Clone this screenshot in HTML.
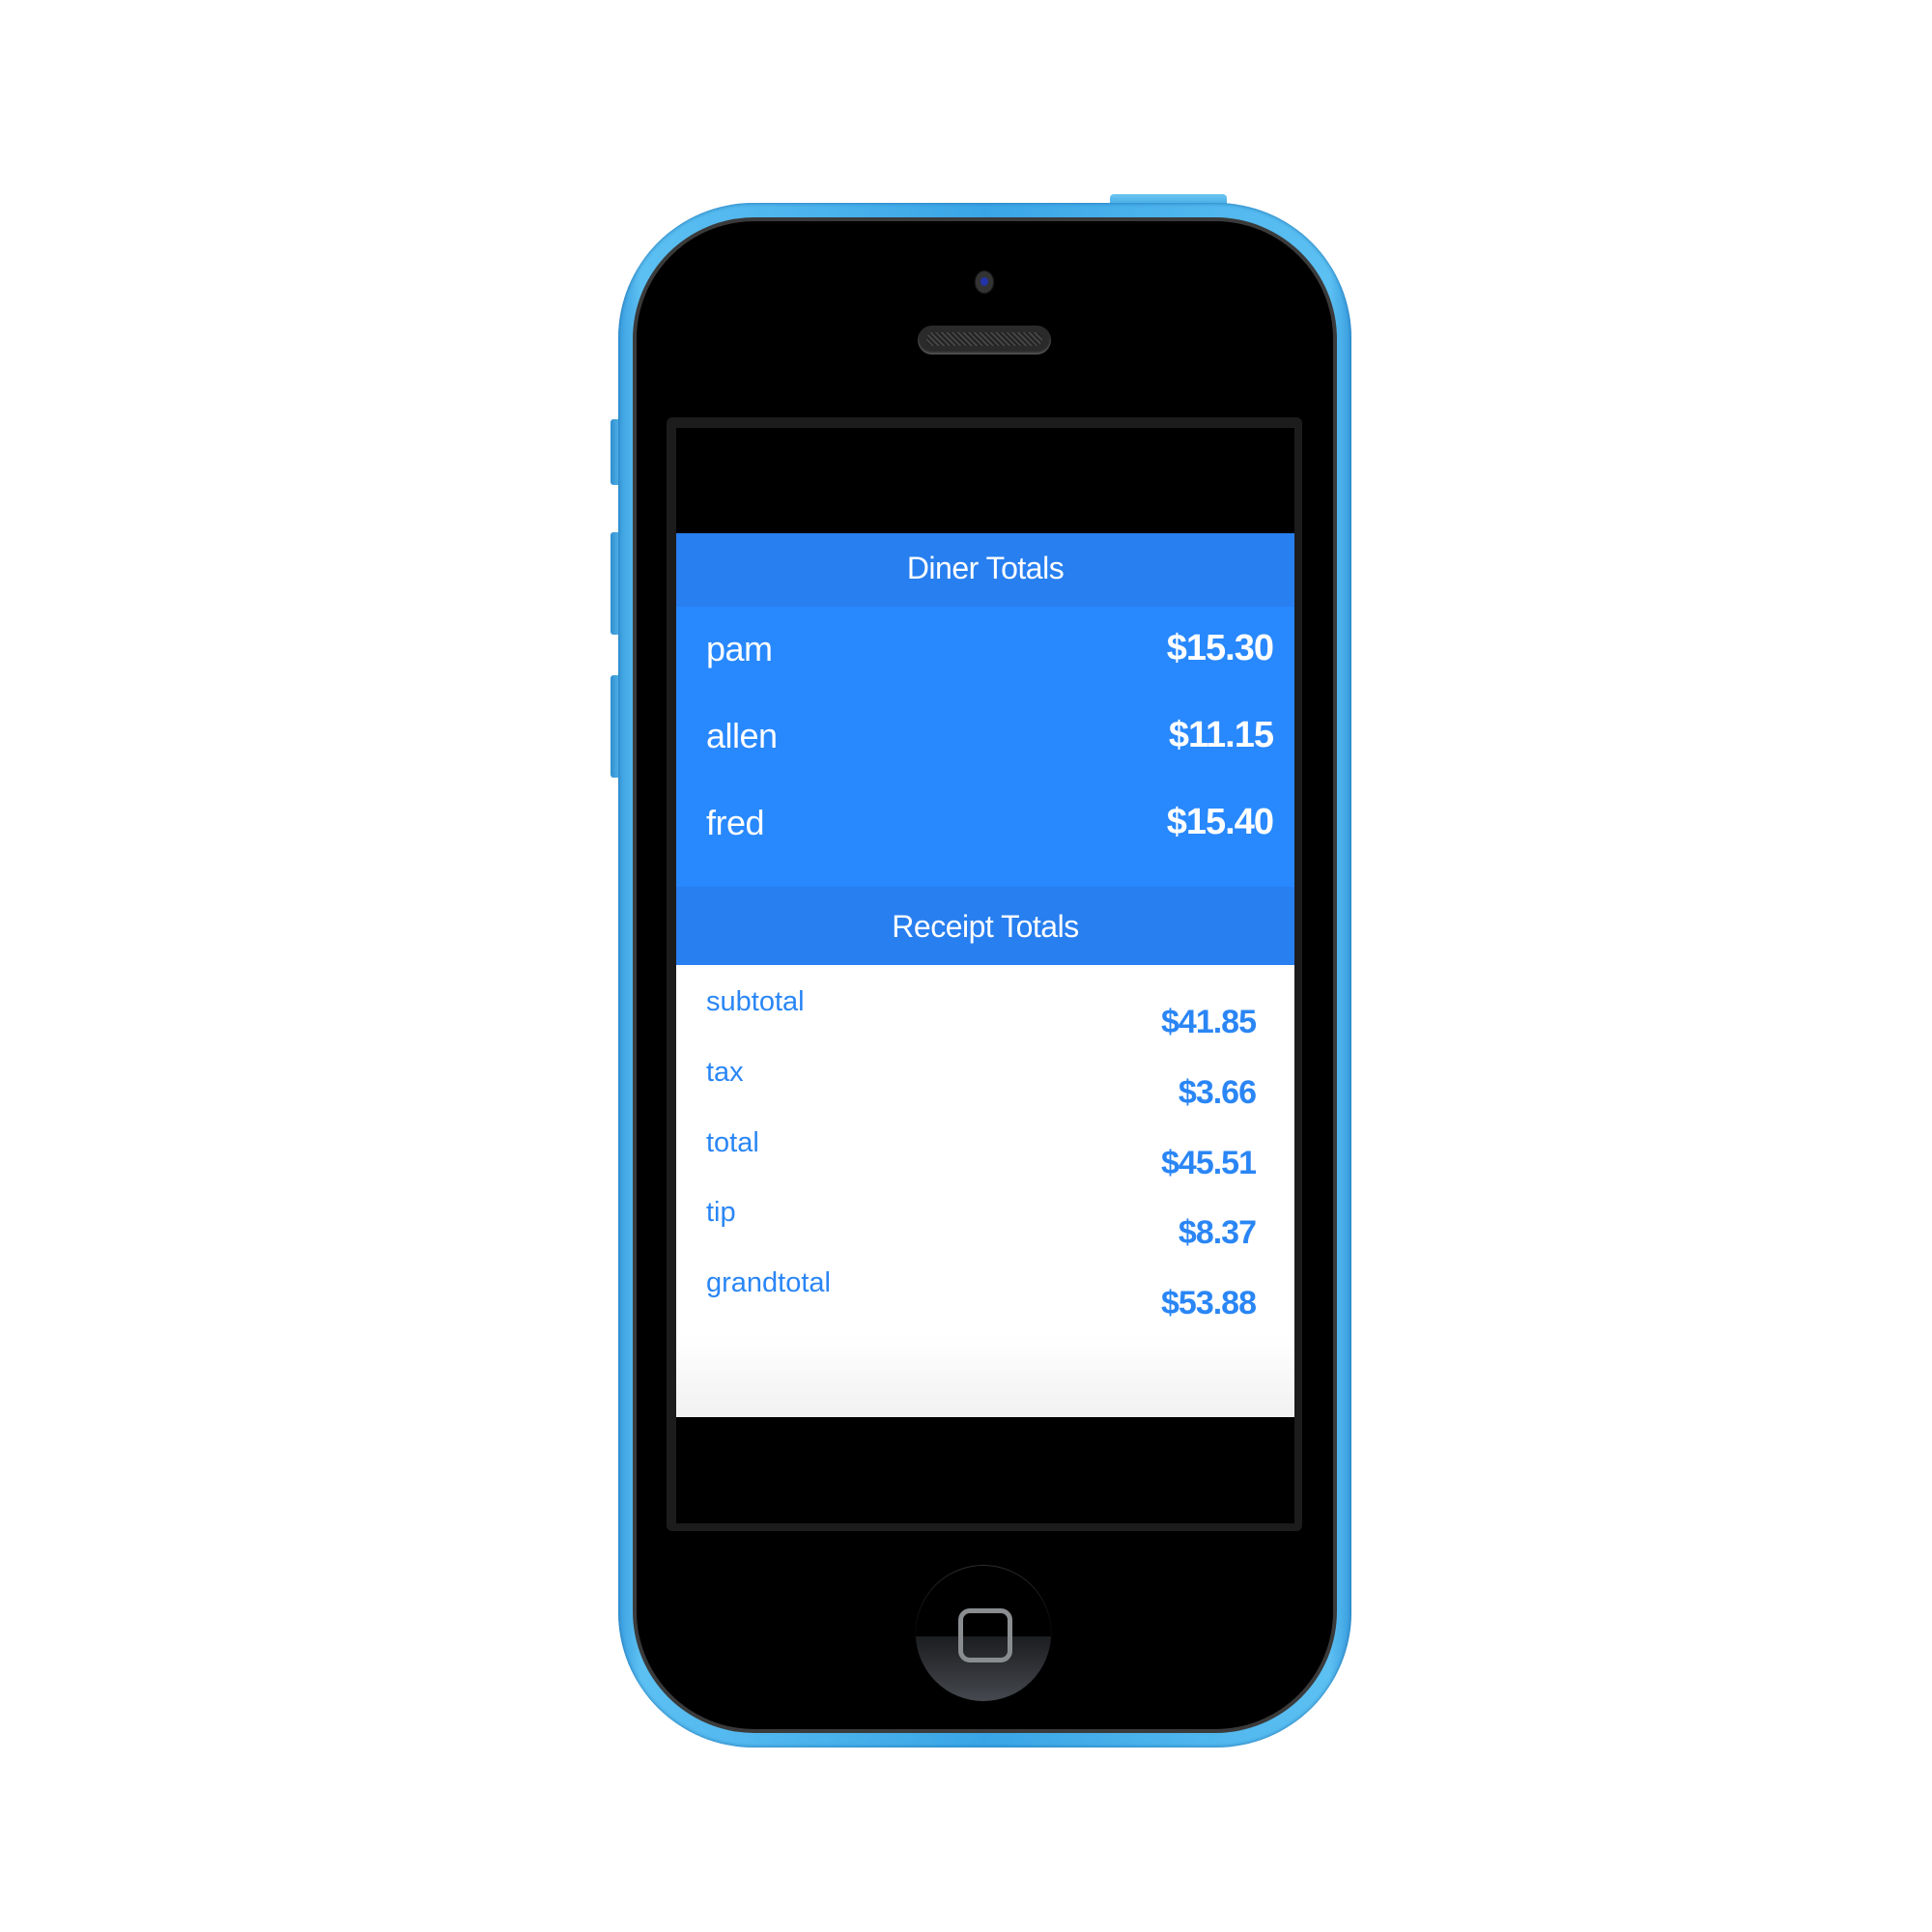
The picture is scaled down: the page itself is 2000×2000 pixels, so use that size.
<!DOCTYPE html>
<html><head><style>
body{margin:0;width:2000px;height:2000px;background:#fff;position:relative;overflow:hidden;font-family:"Liberation Sans",Arial,sans-serif}
.a{position:absolute}
.btn{background:linear-gradient(90deg,#2f8fd0,#5bbcf0);border-radius:3px}
.t{position:absolute;color:#fff;white-space:nowrap}
.lab{position:absolute;left:731px;color:#2a86f5;font-size:29px;white-space:nowrap}
.val{position:absolute;right:700px;color:#2a86f5;font-size:34px;font-weight:bold;white-space:nowrap;letter-spacing:-1px}
.nm{position:absolute;left:731px;color:#fff;font-size:36px;white-space:nowrap;letter-spacing:-0.5px}
.pr{position:absolute;right:682px;color:#fff;font-size:38px;font-weight:bold;white-space:nowrap;letter-spacing:-1px}
</style></head><body>
<div class="a btn" style="left:1149px;top:201px;width:121px;height:14px;border-radius:4px 4px 0 0;background:linear-gradient(#6cc6f2,#3aa4e2)"></div>
<div class="a btn" style="left:632px;top:434px;width:12px;height:68px"></div>
<div class="a btn" style="left:632px;top:551px;width:12px;height:106px"></div>
<div class="a btn" style="left:632px;top:699px;width:12px;height:106px"></div>
<div class="a" style="left:640px;top:210px;width:759px;height:1599px;border-radius:140px;background:linear-gradient(90deg,#3b9fe0,#5cc0f2 3%,#3aa5e6 50%,#5cc0f2 97%,#3b9fe0);box-shadow:inset 0 0 4px #1c6fae"></div>
<div class="a" style="left:655px;top:225px;width:729px;height:1569px;border-radius:126px;background:#3a3a3a"></div>
<div class="a" style="left:659px;top:229px;width:721px;height:1561px;border-radius:122px;background:#000"></div>
<div class="a" style="left:1010px;top:281px;width:18px;height:22px;border-radius:50%;background:#333;box-shadow:0 0 2px #555"></div>
<div class="a" style="left:1015px;top:287px;width:8px;height:9px;border-radius:50%;background:#2233aa"></div>
<div class="a" style="left:950px;top:337px;width:138px;height:30px;border-radius:15px;background:#2a2a2a;box-shadow:inset 0 -2px 2px #555"></div>
<div class="a" style="left:959px;top:344px;width:120px;height:14px;border-radius:7px;background:repeating-linear-gradient(45deg,#444 0 2px,#222 2px 4px)"></div>
<div class="a" style="left:690px;top:432px;width:658px;height:1153px;background:#1c1c1c;border-radius:6px"></div>
<div class="a" style="left:700px;top:443px;width:640px;height:1134px;background:#000"></div>
<div class="a" style="left:700px;top:552px;width:640px;height:76px;background:#287ff0"></div>
<div class="t" style="left:700px;width:640px;text-align:center;top:570px;font-size:32px;letter-spacing:-0.5px">Diner Totals</div>
<div class="a" style="left:700px;top:628px;width:640px;height:290px;background:#2888fe"></div>
<div class="nm" style="top:651px">pam</div>
<div class="pr" style="top:650px">$15.30</div>
<div class="nm" style="top:741px">allen</div>
<div class="pr" style="top:740px">$11.15</div>
<div class="nm" style="top:831px">fred</div>
<div class="pr" style="top:830px">$15.40</div>
<div class="a" style="left:700px;top:918px;width:640px;height:81px;background:#287ff0"></div>
<div class="t" style="left:700px;width:640px;text-align:center;top:941px;font-size:32px;letter-spacing:-0.5px">Receipt Totals</div>
<div class="a" style="left:700px;top:999px;width:640px;height:468px;background:linear-gradient(#fff 82%,#f1f1f1)"></div>
<div class="lab" style="top:1021px">subtotal</div><div class="val" style="top:1039px">$41.85</div>
<div class="lab" style="top:1094px">tax</div><div class="val" style="top:1112px">$3.66</div>
<div class="lab" style="top:1167px">total</div><div class="val" style="top:1185px">$45.51</div>
<div class="lab" style="top:1239px">tip</div><div class="val" style="top:1257px">$8.37</div>
<div class="lab" style="top:1312px">grandtotal</div><div class="val" style="top:1330px">$53.88</div>
<div class="a" style="left:948px;top:1621px;width:140px;height:140px;border-radius:50%;background:linear-gradient(#000 52%,#1c1d20 52%,#45484e);box-shadow:0 -1px 1px #333"></div>
<div class="a" style="left:992px;top:1665px;width:46px;height:46px;border:5px solid #8a8d90;border-radius:12px"></div>
</body></html>
